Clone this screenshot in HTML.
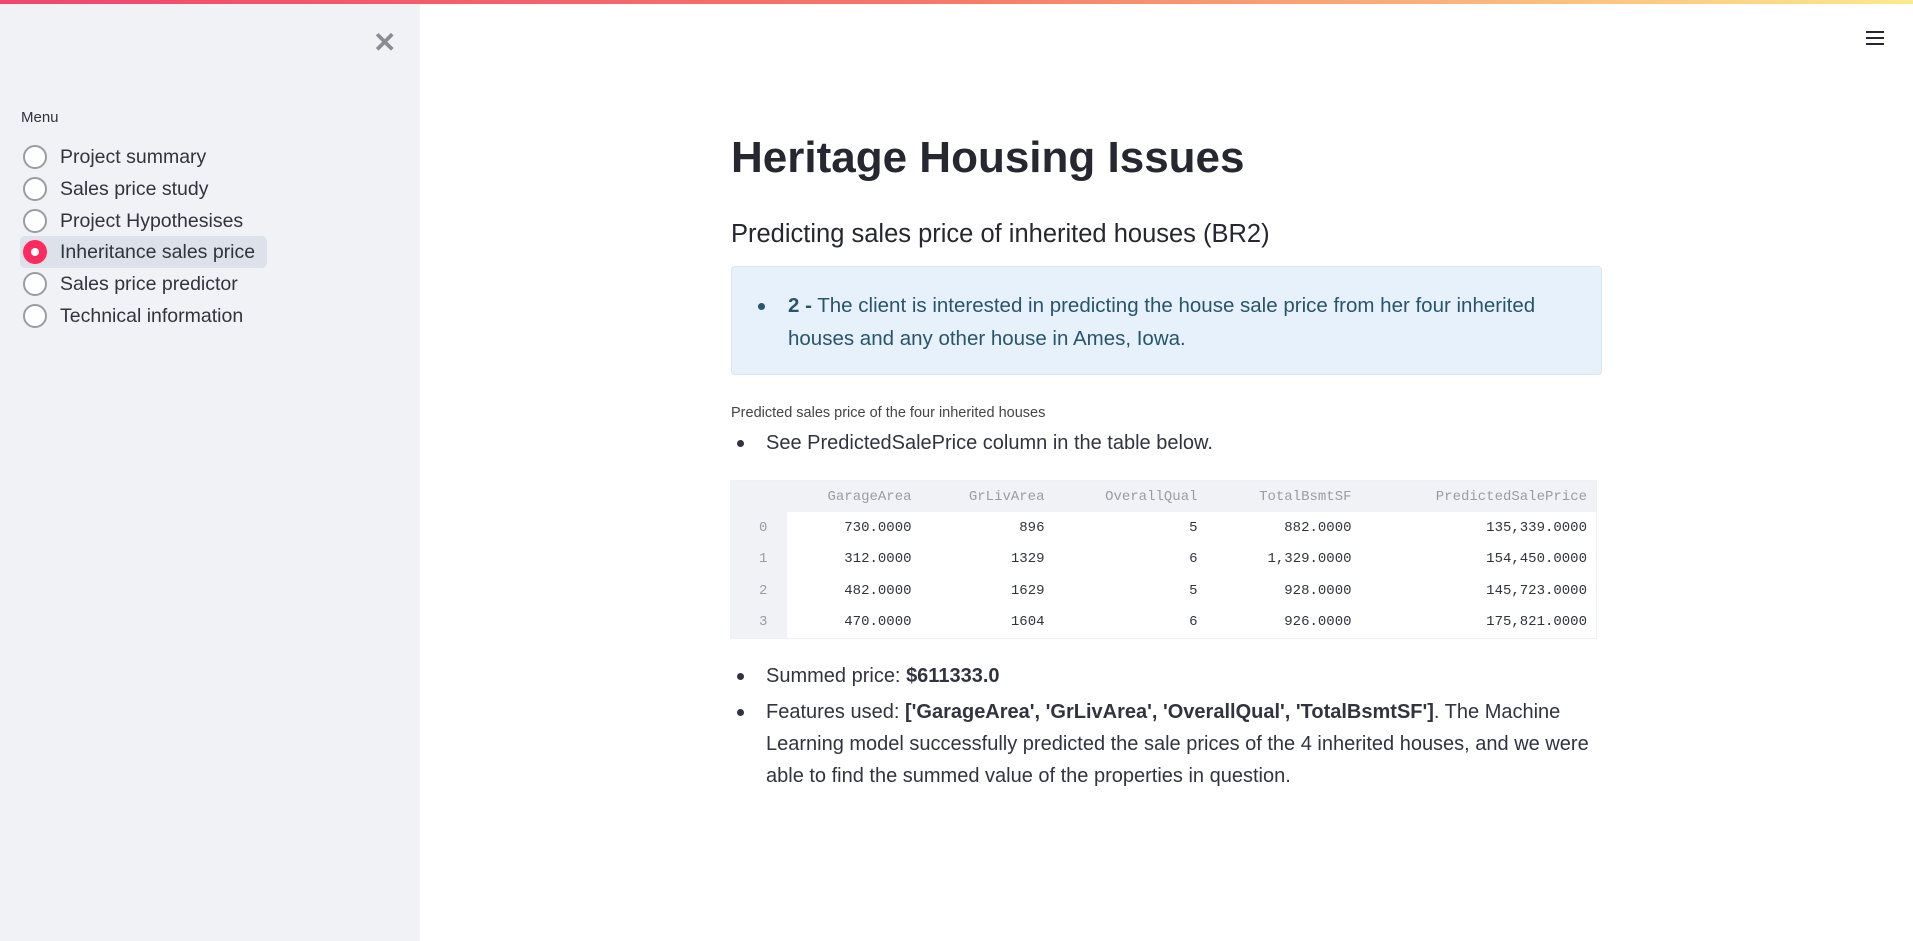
<!DOCTYPE html>
<html><head><meta charset="utf-8"><style>
*{box-sizing:border-box;margin:0;padding:0}
body{width:1913px;height:941px;overflow:hidden;background:#fff;font-family:"Liberation Sans",sans-serif;color:#31333f;position:relative}
.bar{position:absolute;top:0;left:0;width:1913px;height:4px;background:linear-gradient(90deg,#f0466e,#f77a6a 50%,#fde98c)}
.side{position:absolute;top:4px;left:0;width:420px;height:937px;background:#f0f2f6}
.x{position:absolute;left:373px;top:22px;font-size:28px;color:#8a8c94;font-weight:bold}
.menu{position:absolute;left:21px;top:105px;font-size:15px;color:#31333f}
.item{position:absolute;left:20px;height:30px;display:flex;align-items:center;font-size:19.5px;color:#31333f;padding-right:12px;border-radius:5px}
.item .r{width:24px;height:24px;border:2px solid #9a9ca4;border-radius:50%;margin-left:3px;margin-right:13px;background:#fff}
.item.sel{background:#dde1ea}
.item.sel .r{border:none;background:#ff2b5e;position:relative}
.item.sel .r:after{content:"";position:absolute;left:8px;top:8px;width:8px;height:8px;border-radius:50%;background:#fff}
.ham{position:absolute;left:1866px;width:18px;height:2px;background:#262730}
.main{position:absolute;left:731px;top:0;width:871px}
h1{position:absolute;top:133px;left:0;font-size:44px;font-weight:bold;color:#262730;white-space:nowrap}
h3{position:absolute;top:220px;left:0;font-size:25.5px;font-weight:normal;color:#262730;white-space:nowrap}
.info{position:absolute;top:266px;left:0;width:871px;height:109px;background:#e6f1fb;border:1px solid #d6e6f5;border-radius:4px;color:#27566b;font-size:20.5px;line-height:33px}
.info .t{position:absolute;left:56px;top:22px;width:780px}
.info .d{position:absolute;left:26px;top:36px;width:7px;height:7px;border-radius:50%;background:#27566b}
.cap{position:absolute;top:405px;left:0;font-size:14.5px;color:#444}
.b{position:absolute;left:35px;font-size:20px;line-height:32px;white-space:nowrap}
.b:before{content:"";position:absolute;left:-29px;top:13px;width:7px;height:7px;border-radius:50%;background:#31333f}
table{position:absolute;top:480px;left:-1px;border-collapse:collapse;font-family:"Liberation Mono",monospace;font-size:14px;border:1px solid #eef0f3}
td,th{height:31.5px;text-align:right;padding:0 9px;font-weight:normal}
th{background:#f0f2f6;color:#9a9ca4}
td{color:#31333f}
td.i{background:#f0f2f6;color:#9a9ca4;text-align:left;padding-left:28px}
</style></head><body>
<div class="bar"></div>
<div class="side">
<div class="x">✕</div>
<div class="menu">Menu</div>
<div class="item" style="top:138px"><span class="r"></span>Project summary</div>
<div class="item" style="top:170px"><span class="r"></span>Sales price study</div>
<div class="item" style="top:202px"><span class="r"></span>Project Hypothesises</div>
<div class="item sel" style="top:232px;height:32px"><span class="r"></span>Inheritance sales price</div>
<div class="item" style="top:265px"><span class="r"></span>Sales price predictor</div>
<div class="item" style="top:297px"><span class="r"></span>Technical information</div>
</div>
<div class="ham" style="top:31px"></div><div class="ham" style="top:37px"></div><div class="ham" style="top:43px"></div>
<div class="main">
<h1>Heritage Housing Issues</h1>
<h3>Predicting sales price of inherited houses (BR2)</h3>
<div class="info"><span class="d"></span><div class="t"><b>2 -</b> The client is interested in predicting the house sale price from her four inherited houses and any other house in Ames, Iowa.</div></div>
<div class="cap">Predicted sales price of the four inherited houses</div>
<div class="b" style="top:427px">See PredictedSalePrice column in the table below.</div>
<table>
<tr><th style="width:56px"></th><th style="width:134px">GarageArea</th><th style="width:133px">GrLivArea</th><th style="width:153px">OverallQual</th><th style="width:154px">TotalBsmtSF</th><th style="width:236px">PredictedSalePrice</th></tr>
<tr><td class="i">0</td><td>730.0000</td><td>896</td><td>5</td><td>882.0000</td><td>135,339.0000</td></tr>
<tr><td class="i">1</td><td>312.0000</td><td>1329</td><td>6</td><td>1,329.0000</td><td>154,450.0000</td></tr>
<tr><td class="i">2</td><td>482.0000</td><td>1629</td><td>5</td><td>928.0000</td><td>145,723.0000</td></tr>
<tr><td class="i">3</td><td>470.0000</td><td>1604</td><td>6</td><td>926.0000</td><td>175,821.0000</td></tr>
</table>
<div class="b" style="top:660px">Summed price: <b>$611333.0</b></div>
<div class="b" style="top:696px;white-space:normal;width:840px">Features used: <b>['GarageArea', 'GrLivArea', 'OverallQual', 'TotalBsmtSF']</b>. The Machine Learning model successfully predicted the sale prices of the 4 inherited houses, and we were able to find the summed value of the properties in question.</div>
</div>
</body></html>
